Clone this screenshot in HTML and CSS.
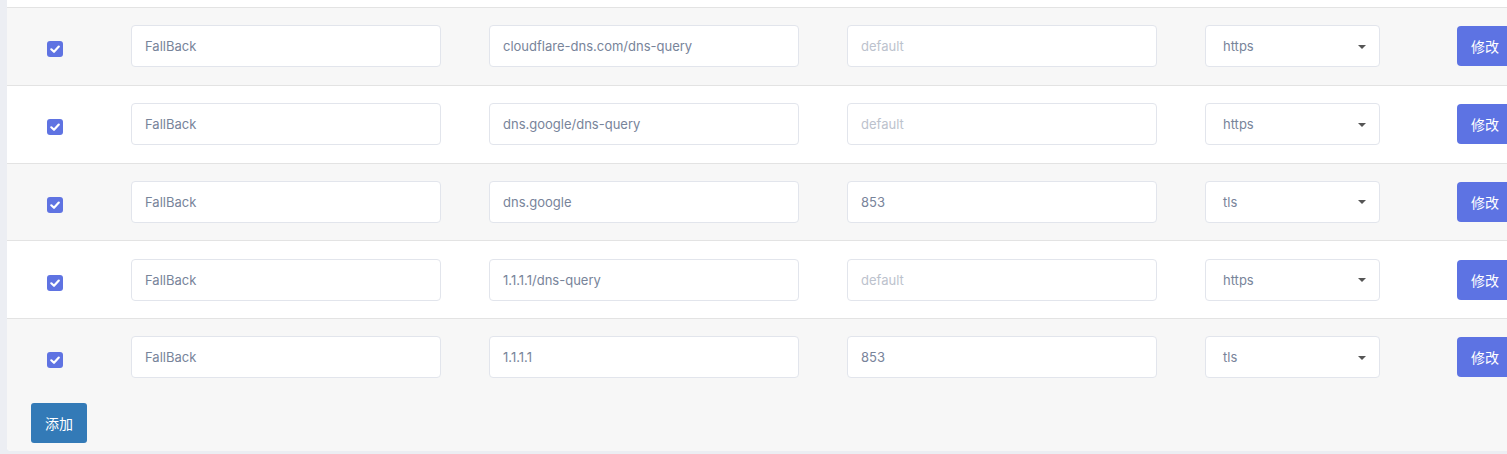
FILE: index.html
```html
<!DOCTYPE html>
<html lang="zh">
<head>
<meta charset="utf-8">
<link rel="stylesheet" href="styles.css">
</head>
<body>
<div class="page">
  <div class="card">
    <div class="table">
      <div class="row">
        <span class="check"><svg viewBox="0 0 16 16" width="16" height="16"><path d="M4.3 8.3 L7 10.8 L11.8 5.6" fill="none" stroke="#fff" stroke-width="2.2" stroke-linecap="round" stroke-linejoin="round"/></svg></span>
        <input class="field f1" value="FallBack">
        <input class="field f2" value="cloudflare-dns.com/dns-query">
        <input class="field f3" placeholder="default">
        <div class="select"><span>https</span><i class="caret"></i></div>
        <button class="btn-edit">修改</button>
      </div>
      <div class="row">
        <span class="check"><svg viewBox="0 0 16 16" width="16" height="16"><path d="M4.3 8.3 L7 10.8 L11.8 5.6" fill="none" stroke="#fff" stroke-width="2.2" stroke-linecap="round" stroke-linejoin="round"/></svg></span>
        <input class="field f1" value="FallBack">
        <input class="field f2" value="dns.google/dns-query">
        <input class="field f3" placeholder="default">
        <div class="select"><span>https</span><i class="caret"></i></div>
        <button class="btn-edit">修改</button>
      </div>
      <div class="row">
        <span class="check"><svg viewBox="0 0 16 16" width="16" height="16"><path d="M4.3 8.3 L7 10.8 L11.8 5.6" fill="none" stroke="#fff" stroke-width="2.2" stroke-linecap="round" stroke-linejoin="round"/></svg></span>
        <input class="field f1" value="FallBack">
        <input class="field f2" value="dns.google">
        <input class="field f3" value="853">
        <div class="select"><span>tls</span><i class="caret"></i></div>
        <button class="btn-edit">修改</button>
      </div>
      <div class="row">
        <span class="check"><svg viewBox="0 0 16 16" width="16" height="16"><path d="M4.3 8.3 L7 10.8 L11.8 5.6" fill="none" stroke="#fff" stroke-width="2.2" stroke-linecap="round" stroke-linejoin="round"/></svg></span>
        <input class="field f1" value="FallBack">
        <input class="field f2" value="1.1.1.1/dns-query">
        <input class="field f3" placeholder="default">
        <div class="select"><span>https</span><i class="caret"></i></div>
        <button class="btn-edit">修改</button>
      </div>
      <div class="row">
        <span class="check"><svg viewBox="0 0 16 16" width="16" height="16"><path d="M4.3 8.3 L7 10.8 L11.8 5.6" fill="none" stroke="#fff" stroke-width="2.2" stroke-linecap="round" stroke-linejoin="round"/></svg></span>
        <input class="field f1" value="FallBack">
        <input class="field f2" value="1.1.1.1">
        <input class="field f3" value="853">
        <div class="select"><span>tls</span><i class="caret"></i></div>
        <button class="btn-edit">修改</button>
      </div>
      <div class="footer">
        <button class="btn-add">添加</button>
      </div>
    </div>
  </div>
</div>
</body>
</html>
```
FILE: styles.css
```css
html, body {
  margin: 0;
  padding: 0;
  height: 100%;
  overflow: hidden;
  background: #eceef3;
  font-family: Inter, "Noto Sans", "Noto Sans CJK SC", sans-serif;
}
.page {
  padding-left: 7px;
  overflow: hidden;
}
.card {
  background: #ffffff;
  padding-top: 7px;
  border-bottom-left-radius: 4px;
  height: 451px;
  box-sizing: border-box;
  overflow: hidden;
}
.table {
  background: #f7f7f7;
  border-bottom-left-radius: 4px;
}
.row {
  display: flex;
  align-items: center;
  height: 76.75px;
  border-top: 1px solid #e3e3e3;
  padding-left: 40px;
  white-space: nowrap;
}
.row:nth-child(even) {
  background: #ffffff;
}
.check {
  width: 16px;
  height: 16px;
  border-radius: 3px;
  background: #5f73e2;
  display: flex;
  margin-top: 6px;
  margin-right: 68px;
  flex: none;
}
.field {
  width: 310px;
  height: 42px;
  box-sizing: border-box;
  border: 1px solid #e2e5ec;
  border-radius: 4px;
  background: #fff;
  padding: 0 13px;
  font-family: inherit;
  font-size: 13px;
  color: #78849a;
  margin-right: 48px;
  outline: none;
  flex: none;
}
.field::placeholder {
  color: #bcc2cd;
}
.select {
  width: 175px;
  height: 42px;
  box-sizing: border-box;
  border: 1px solid #e2e5ec;
  border-radius: 4px;
  background: #fff;
  padding: 0 17px;
  display: flex;
  align-items: center;
  justify-content: space-between;
  font-size: 13px;
  color: #78849a;
  margin-right: 77px;
  flex: none;
}
.caret {
  width: 0;
  height: 0;
  border-left: 4px solid transparent;
  border-right: 4px solid transparent;
  border-top: 4px solid #555;
  margin-right: -4px;
  margin-top: 1px;
}
.btn-edit {
  width: 60px;
  height: 40px;
  flex: none;
  border: none;
  border-radius: 4px;
  background: #5d73e3;
  color: #fff;
  font-family: inherit;
  font-size: 14px;
  text-align: left;
  padding-left: 14px;
}
.footer {
  padding: 7px 0 8px 24px;
}
.btn-add {
  width: 56px;
  height: 40px;
  border: none;
  border-radius: 3px;
  background: #337ab7;
  color: #fff;
  font-family: inherit;
  font-size: 14px;
  padding: 0;
}
```
